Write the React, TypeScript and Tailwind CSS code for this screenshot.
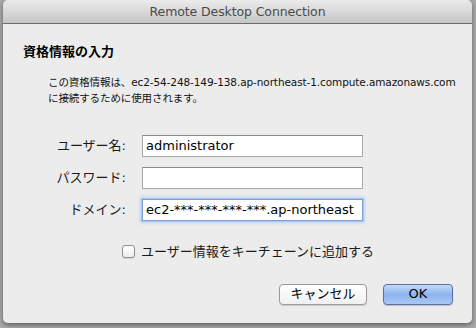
const font = {
  fontFamily: '"DejaVu Sans", "Noto Sans CJK JP", sans-serif',
};

function Field({ label, value, focused }: { label: string; value: string; focused?: boolean }) {
  return (
    <div className="flex items-center h-[22px]">
      <div className="w-[125px] text-right text-[13px] text-[#1a1a1a] pr-[2px]">{label}</div>
      <div className="ml-[14px] w-[221px] h-[22px] relative">
        <div
          className={
            focused
              ? 'absolute inset-0 bg-white border border-[#7f9fd4] shadow-[0_0_0_1px_#a9c6f2,0_0_3px_2px_#bcd3f5] overflow-hidden'
              : 'absolute inset-0 bg-white border border-[#a8a8a8] border-t-[#8c8c8c] overflow-hidden'
          }
        >
          <span className="block pl-[3px] text-[13px] leading-[20px] text-black whitespace-nowrap">{value}</span>
        </div>
      </div>
    </div>
  );
}

export default function App() {
  return (
    <div className="w-[476px] h-[328px] bg-[#a9a9a9] overflow-hidden" style={font}>
      <div className="ml-[3px] w-[469px] h-[323px] flex flex-col rounded-[5px] overflow-hidden shadow-[0_2px_5px_rgba(0,0,0,0.45)]">
        <div className="h-[24px] shrink-0 bg-gradient-to-b from-[#ebebeb] to-[#c6c6c6] flex items-center justify-center border-b border-[#6d6d6d] pt-[2px]">
          <span className="text-[12.5px] text-[#4a4a4a] tracking-[-0.1px]">Remote Desktop Connection</span>
        </div>
        <div className="flex-1 bg-[#ececec] flex flex-col pt-[19px]">
          <div className="pl-[20px] text-[13px] font-bold text-black leading-[18px]">資格情報の入力</div>
          <div className="pl-[45px] mt-[13px] text-[10.5px] leading-[16px] text-[#111] tracking-[-0.1px]">
            <div>この資格情報は、ec2-54-248-149-138.ap-northeast-1.compute.amazonaws.com</div>
            <div>に接続するために使用されます。</div>
          </div>
          <div className="mt-[29px] flex flex-col gap-[10px]">
            <Field label="ユーザー名:" value="administrator" />
            <Field label="パスワード:" value="" />
            <Field label="ドメイン:" value="ec2-***-***-***-***.ap-northeast" focused />
          </div>
          <div className="mt-[21px] pl-[119px] flex items-center gap-[6px]">
            <div className="w-[13px] h-[13px] rounded-[3px] border border-[#8f8f8f] bg-gradient-to-b from-white to-[#ececec] shadow-[0_1px_1px_rgba(0,0,0,0.1)]" />
            <span className="text-[13px] text-[#1a1a1a]">ユーザー情報をキーチェーンに追加する</span>
          </div>
          <div className="mt-[22px] flex justify-end pr-[19px] gap-[16px]">
            <button className="w-[88px] h-[21px] rounded-[4px] border border-[#9a9a9a] bg-gradient-to-b from-white to-[#f0f0f0] text-[13px] text-black flex items-center justify-center shadow-[0_1px_1px_rgba(0,0,0,0.15)]">
              キャンセル
            </button>
            <button className="w-[70px] h-[21px] rounded-[4px] border border-[#5a6fa6] bg-gradient-to-b from-[#c5d9f6] via-[#8eb4ee] to-[#a9c8f5] text-[13px] text-black flex items-center justify-center shadow-[0_1px_1px_rgba(0,0,0,0.2)]">
              OK
            </button>
          </div>
        </div>
      </div>
    </div>
  );
}
